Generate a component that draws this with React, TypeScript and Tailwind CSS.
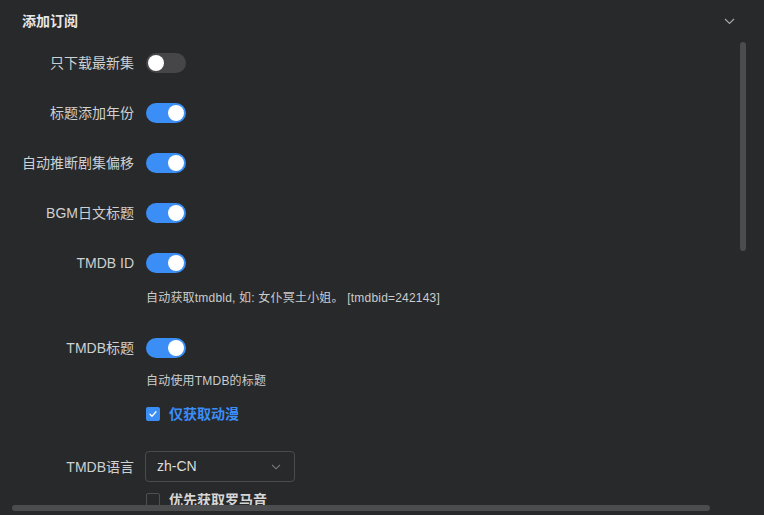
import React from 'react';

const Toggle: React.FC<{ on?: boolean }> = ({ on }) => (
  <div
    className={
      'relative h-[20px] w-[40px] shrink-0 rounded-full ' + (on ? 'bg-[#3a8ef6]' : 'bg-[#464649]')
    }
  >
    <div
      className={
        'absolute top-[2px] h-[16px] w-[16px] rounded-full bg-white ' + (on ? 'left-[22px]' : 'left-[2px]')
      }
    />
  </div>
);

const Check: React.FC<{ checked?: boolean; label: string }> = ({ checked, label }) => (
  <div className="flex h-[22px] items-center gap-[9px]">
    {checked ? (
      <div className="flex h-[14px] w-[14px] items-center justify-center rounded-[2px] bg-[#3a8ef6]">
        <svg width="10" height="10" viewBox="0 0 10 10" fill="none">
          <path d="M2 5.2l2 2 4-4.4" stroke="white" strokeWidth="1.3" strokeLinecap="round" strokeLinejoin="round" />
        </svg>
      </div>
    ) : (
      <div className="h-[14px] w-[14px] rounded-[2px] border border-[#4e4f52]" />
    )}
    <span className={'text-[14px] font-semibold ' + (checked ? 'text-[#3a8ef6]' : 'text-[#d6d6d6]')}>{label}</span>
  </div>
);

const Row: React.FC<{ label: string; children: React.ReactNode; className?: string }> = ({
  label,
  children,
  className,
}) => (
  <div className={'flex items-center gap-[12px] pl-[22px] ' + (className ?? '')}>
    <div className="w-[112px] shrink-0 text-right text-[14px] leading-[20px] text-[#cfd0d1]">{label}</div>
    {children}
  </div>
);

const Help: React.FC<{ text: string; className?: string }> = ({ text, className }) => (
  <div className={'pl-[146px] text-[12px] leading-[20px] tracking-[0.2px] text-[#cbcccd] ' + (className ?? '')}>
    {text}
  </div>
);

export default function App() {
  return (
    <div
      className="relative h-[515px] w-[764px] overflow-hidden bg-[#28292a]"
      style={{ fontFamily: '"Liberation Sans", "Noto Sans CJK SC", sans-serif' }}
    >
      <div className="flex h-[42px] items-center justify-between pl-[22px] pr-[29px]">
        <span className="text-[14px] font-bold text-[#e6e6e6]">添加订阅</span>
        <svg width="11" height="7" viewBox="0 0 11 7" fill="none">
          <path d="M1 1l4.5 4.5L10 1" stroke="#a5a6a7" strokeWidth="1.2" />
        </svg>
      </div>

      <div className="flex flex-col pt-[11px]">
        <Row label="只下载最新集">
          <Toggle />
        </Row>
        <Row label="标题添加年份" className="mt-[30px]">
          <Toggle on />
        </Row>
        <Row label="自动推断剧集偏移" className="mt-[30px]">
          <Toggle on />
        </Row>
        <Row label="BGM日文标题" className="mt-[30px]">
          <Toggle on />
        </Row>
        <Row label="TMDB ID" className="mt-[30px]">
          <Toggle on />
        </Row>
        <Help text="自动获取tmdbld, 如: 女仆冥土小姐。 [tmdbid=242143]" className="mt-[15px]" />
        <Row label="TMDB标题" className="mt-[30px]">
          <Toggle on />
        </Row>
        <Help text="自动使用TMDB的标题" className="mt-[13px]" />
        <div className="mt-[12px] pl-[146px]">
          <Check checked label="仅获取动漫" />
        </div>
        <Row label="TMDB语言" className="mt-[26px]">
          <div className="-ml-px flex h-[31px] w-[150px] items-center justify-between rounded-[4px] border border-[#4a4b4d] pl-[11px] pr-[13px]">
            <span className="text-[14px] text-[#dcdcdc]">zh-CN</span>
            <svg width="10" height="6" viewBox="0 0 10 6" fill="none">
              <path d="M1 0.8l4 4 4-4" stroke="#7c7d7f" strokeWidth="1.1" />
            </svg>
          </div>
        </Row>
        <div className="mt-[7px] pl-[146px]">
          <Check label="优先获取罗马音" />
        </div>
      </div>

      <div className="absolute left-[740px] top-[42px] h-[209px] w-[6px] rounded-full bg-[#4b4c4e]" />
      <div className="absolute left-[12px] top-[505px] h-[6px] w-[698px] rounded-full bg-[#4b4c4e]" />
    </div>
  );
}
